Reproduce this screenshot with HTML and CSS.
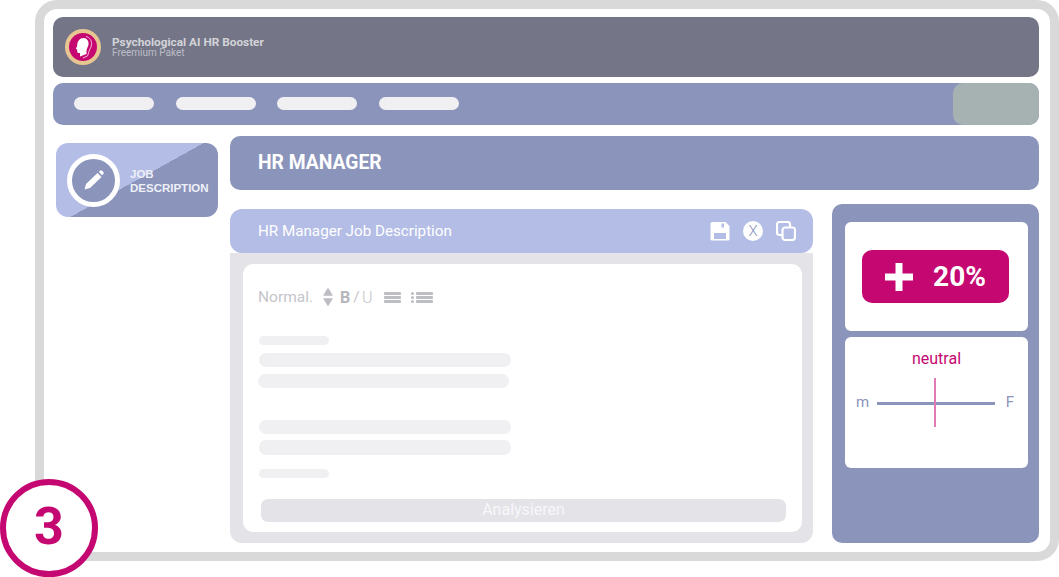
FILE: index.html
```html
<!DOCTYPE html>
<html lang="de">
<head>
    <meta charset="UTF-8">
    <title>Psychological AI HR Booster</title>
    <link rel="stylesheet" href="styles.css">
</head>
<body>
    <div class="step-badge">3</div>
    <div class="frame">
        <header class="app-header">
            <div class="logo">
                <svg viewBox="0 0 36 36" width="36" height="36">
                    <circle cx="18" cy="18" r="18" fill="#e8c692"/>
                    <circle cx="18" cy="18" r="14" fill="#c50771"/>
                    <path d="M15 27.500V24h-1.500c-.9 0-1.300-.6-1.300-1.400v-2.100l-1.400-.7 1.400-2.800C12 12 15 9 18.500 9c3.500 0 5.500 3 5 6.500-.3 2.500-2 4-2 6.500v3z" fill="#fff"/>
                    <path d="M21 7.500c4 1 6 4.500 5.500 8.500-.5 3-2.500 5-3 8l-1 3-4.500 2" fill="none" stroke="#f5b8d8" stroke-width="1"/>
                </svg>
            </div>
            <div class="brand">
                <div class="brand-name">Psychological AI HR Booster</div>
                <div class="brand-plan">Freemium Paket</div>
            </div>
        </header>

        <nav class="app-nav">
            <span class="nav-pill"></span>
            <span class="nav-pill"></span>
            <span class="nav-pill"></span>
            <span class="nav-pill"></span>
            <span class="nav-box"></span>
        </nav>

        <div class="main">
            <aside class="side">
                <div class="job-card">
                    <div class="job-ring">
                        <svg viewBox="0 0 20 20" width="20" height="20">
                            <path d="M.5 19.500L2 14 13.500 3l4 4L6 18z" fill="#fff"/>
                            <path d="M14.800 1.800L16 .7a1.500 1.500 0 0 1 2 0l1.300 1.300a1.500 1.500 0 0 1 0 2L18 5.300z" fill="#fff"/>
                        </svg>
                    </div>
                    <div class="job-label">JOB<br>DESCRIPTION</div>
                </div>
            </aside>

            <section class="content">
                <h1 class="page-title">HR MANAGER</h1>
                <div class="work">
                    <div class="editor">
                        <div class="editor-head">
                            <span class="editor-title">HR Manager Job Description</span>
                            <div class="editor-icons">
                                <svg viewBox="0 0 20 20" width="20" height="20">
                                    <path fill-rule="evenodd" d="M2 1h13.500L19.500 5v13a1.500 1.500 0 0 1-1.500 1.500H2A1.500 1.500 0 0 1 .5 18V2.500A1.500 1.500 0 0 1 2 1zM11.500 2.500v4h2.500v-4zM4 12v6h12v-6z" fill="#fff"/>
                                </svg>
                                <span class="icon-x">X</span>
                                <svg viewBox="0 0 20 20" width="20" height="20">
                                    <rect x="1" y="1" width="13" height="13" rx="2.500" fill="none" stroke="#fff" stroke-width="2.200"/>
                                    <rect x="6.500" y="6.500" width="12.500" height="12.500" rx="2.500" fill="#b4bde6" stroke="#fff" stroke-width="2.200"/>
                                </svg>
                            </div>
                        </div>
                        <div class="editor-body">
                            <div class="sheet">
                                <div class="toolbar">
                                    <span class="tool-style">Normal.</span>
                                    <span class="tool-arrows"></span>
                                    <b class="tool-b">B</b>
                                    <span class="tool-i">/</span>
                                    <span class="tool-u">U</span>
                                    <span class="tool-lines"><i></i><i></i><i></i></span>
                                    <span class="tool-list">
                                        <span class="dots"><i></i><i></i><i></i></span>
                                        <span class="tool-lines wide"><i></i><i></i><i></i></span>
                                    </span>
                                </div>
                                <div class="skeleton">
                                    <div class="bar short"></div>
                                    <div class="bar long"></div>
                                    <div class="bar long second"></div>
                                    <div class="bar long gap"></div>
                                    <div class="bar long fifth"></div>
                                    <div class="bar short last"></div>
                                </div>
                                <div class="analyse">Analysieren</div>
                            </div>
                        </div>
                    </div>

                    <div class="score-panel">
                        <div class="score-card">
                            <div class="score-btn">
                                <svg viewBox="0 0 28 28" width="28" height="28">
                                    <path d="M10.500 0h7v10.500H28v7H17.500V28h-7V17.500H0v-7h10.500z" fill="#fff"/>
                                </svg>
                                <span>20%</span>
                            </div>
                        </div>
                        <div class="gender-card">
                            <div class="gender-title">neutral</div>
                            <div class="gender-scale">
                                <span>m</span>
                                <div class="gender-line"><i class="gender-mark"></i></div>
                                <span>F</span>
                            </div>
                        </div>
                    </div>
                </div>
            </section>
        </div>
    </div>
</body>
</html>
```

FILE: styles.css
```css
html, body {
    margin: 0;
    padding: 0;
    height: 577px;
    overflow: hidden;
    background: white;
}
body {
    position: relative;
    font-family: Roboto, 'Noto Sans', sans-serif;
}
.frame {
    box-sizing: border-box;
    width: 1024px;
    height: 561px;
    margin-left: 35px;
    padding: 8px 11px 0 9px;
    border: 9px solid #d9d9d9;
    border-radius: 22px;
    background: white;
}
.step-badge {
    position: absolute;
    left: 0;
    top: 479px;
    box-sizing: border-box;
    width: 98px;
    height: 98px;
    border: 6px solid #c50771;
    border-radius: 50%;
    background: white;
    color: #c50771;
    font-size: 52px;
    font-weight: 700;
    line-height: 84px;
    text-align: center;
}
.app-header {
    display: flex;
    align-items: center;
    height: 60px;
    padding-left: 12px;
    border-radius: 10px;
    background: #747687;
}
.logo {
    display: flex;
    width: 36px;
    height: 36px;
}
.brand {
    margin-left: 11px;
    margin-top: -1px;
    color: #d3d3d8;
}
.brand-name {
    font-size: 11.800px;
    font-weight: 700;
    line-height: 12px;
}
.brand-plan {
    font-size: 10px;
    line-height: 9px;
    color: #bcbdc6;
}
.app-nav {
    display: flex;
    align-items: center;
    box-sizing: border-box;
    height: 42px;
    margin-top: 6px;
    padding: 0 0 0 21px;
    border-radius: 10px;
    background: #8b94bb;
}
.nav-pill {
    width: 80px;
    height: 13px;
    margin-right: 22px;
    margin-bottom: 2px;
    border-radius: 7px;
    background: #f0f0f3;
}
.nav-pill:nth-child(2) {
    margin-right: 21px;
}
.nav-box {
    width: 86px;
    height: 42px;
    margin-left: auto;
    border-radius: 10px;
    background: #a6b1b2;
}
.main {
    display: flex;
    margin-top: 11px;
}
.side {
    width: 177px;
    padding: 7px 0 0 3px;
    box-sizing: border-box;
}
.job-card {
    display: flex;
    align-items: center;
    box-sizing: border-box;
    width: 162px;
    height: 74px;
    padding-left: 11px;
    border-radius: 12px;
    background: linear-gradient(151deg, #b4bde6 50%, #8b94bb 50%);
}
.job-ring {
    display: flex;
    align-items: center;
    justify-content: center;
    box-sizing: border-box;
    width: 53px;
    height: 53px;
    border: 5px solid white;
    border-radius: 50%;
    background: #8b94bb;
}
.job-label {
    margin-left: 10px;
    padding-top: 2px;
    font-family: 'Liberation Sans', Arial, sans-serif;
    font-size: 11.500px;
    font-weight: 700;
    line-height: 14px;
    color: #eef0f8;
}
.content {
    flex: 1;
}
.page-title {
    box-sizing: border-box;
    height: 54px;
    margin: 0;
    padding-left: 28px;
    border-radius: 10px;
    background: #8b94bb;
    color: white;
    font-size: 19.300px;
    font-weight: 700;
    line-height: 54px;
}
.work {
    display: flex;
    align-items: flex-start;
    margin-top: 14px;
}
.editor {
    width: 583px;
    margin-top: 5px;
}
.editor-head {
    display: flex;
    align-items: center;
    justify-content: space-between;
    height: 44px;
    padding: 0 17px 0 28px;
    border-radius: 12px;
    background: #b4bde6;
    color: white;
    font-size: 15.200px;
}
.editor-title {
    margin-top: -1px;
}
.editor-icons {
    display: flex;
    align-items: center;
    margin-top: -1px;
    gap: 13px;
}
.icon-x {
    width: 20px;
    height: 20px;
    border-radius: 50%;
    background: white;
    color: #8b94bb;
    font-size: 15px;
    font-weight: 300;
    line-height: 20px;
    text-align: center;
}
.editor-body {
    height: 290px;
    box-sizing: border-box;
    padding: 11px 11px 11px 13px;
    border-radius: 0 0 12px 12px;
    background: #e3e3e8;
}
.sheet {
    box-sizing: border-box;
    height: 268px;
    padding: 0 16px 0 15px;
    border-radius: 10px;
    background: white;
}
.toolbar {
    display: flex;
    align-items: center;
    height: 66px;
    color: #c5c5cb;
    font-size: 15.500px;
}
.tool-style {
    width: 65px;
}
.tool-arrows {
    width: 10px;
    height: 19px;
    margin-right: 7px;
    background: #bdbdc4;
    clip-path: polygon(50% 0, 100% 44%, 0 44%, 0 56%, 100% 56%, 50% 100%, 0 56%, 0 44%);
}
.tool-b {
    width: 11px;
    font-size: 16px;
    color: #b5b5bc;
}
.tool-i {
    width: 11px;
    text-align: center;
}
.tool-u {
    width: 12px;
    font-size: 16px;
    font-weight: 300;
}
.tool-lines {
    display: flex;
    flex-direction: column;
    gap: 1px;
    width: 17px;
    margin-left: 10px;
}
.tool-lines i {
    height: 3px;
    border-radius: 1px;
    background: #bdbdc4;
}
.tool-list {
    display: flex;
    align-items: center;
    margin-left: 10px;
}
.tool-list .tool-lines {
    margin-left: 2px;
}
.dots {
    display: flex;
    flex-direction: column;
    gap: 1px;
}
.dots i {
    width: 3px;
    height: 3px;
    border-radius: 50%;
    background: #bdbdc4;
}
.skeleton {
    margin-top: 6px;
    height: 163px;
}
.bar {
    border-radius: 7px;
    background: #f0f0f3;
}
.bar.short {
    width: 70px;
    height: 9px;
    margin-left: 1px;
}
.bar.long {
    width: 252px;
    height: 14px;
    margin-top: 8px;
    margin-left: 1px;
}
.bar.second {
    width: 251px;
    margin-top: 7px;
    margin-left: 0;
}
.bar.gap {
    margin-top: 32px;
}
.bar.fifth {
    height: 15px;
    margin-top: 6px;
}
.bar.last {
    margin-top: 14px;
}
.analyse {
    width: 525px;
    height: 23px;
    margin-left: 3px;
    border-radius: 7px;
    background: #e3e3e8;
    color: #f7f7f9;
    font-size: 16px;
    line-height: 21px;
    text-align: center;
}
.score-panel {
    box-sizing: border-box;
    width: 207px;
    height: 339px;
    margin-left: 19px;
    padding: 18px 11px 0 13px;
    border-radius: 10px;
    background: #8b94bb;
}
.score-card {
    display: flex;
    align-items: flex-start;
    justify-content: center;
    box-sizing: border-box;
    height: 109px;
    padding-top: 28px;
    padding-right: 2px;
    border-radius: 6px;
    background: white;
}
.score-btn {
    display: flex;
    align-items: center;
    justify-content: center;
    gap: 20px;
    width: 147px;
    height: 53px;
    border-radius: 10px;
    background: #c50771;
    color: white;
    font-size: 28px;
    font-weight: 700;
}
.gender-card {
    box-sizing: border-box;
    height: 131px;
    margin-top: 6px;
    padding-top: 12px;
    border-radius: 6px;
    background: white;
}
.gender-title {
    color: #c50771;
    font-size: 16px;
    line-height: 20px;
    text-align: center;
}
.gender-scale {
    display: flex;
    align-items: center;
    justify-content: space-between;
    height: 48px;
    margin-top: 9px;
    padding: 0 14px 0 11px;
    color: #8b94bb;
    font-size: 15px;
}
.gender-line {
    position: relative;
    width: 118px;
    height: 3px;
    margin-top: 2px;
    margin-left: -2px;
    background: #8b94bb;
}
.gender-mark {
    position: absolute;
    left: 57px;
    top: -24px;
    width: 2px;
    height: 49px;
    background: #e07ab4;
}
```
